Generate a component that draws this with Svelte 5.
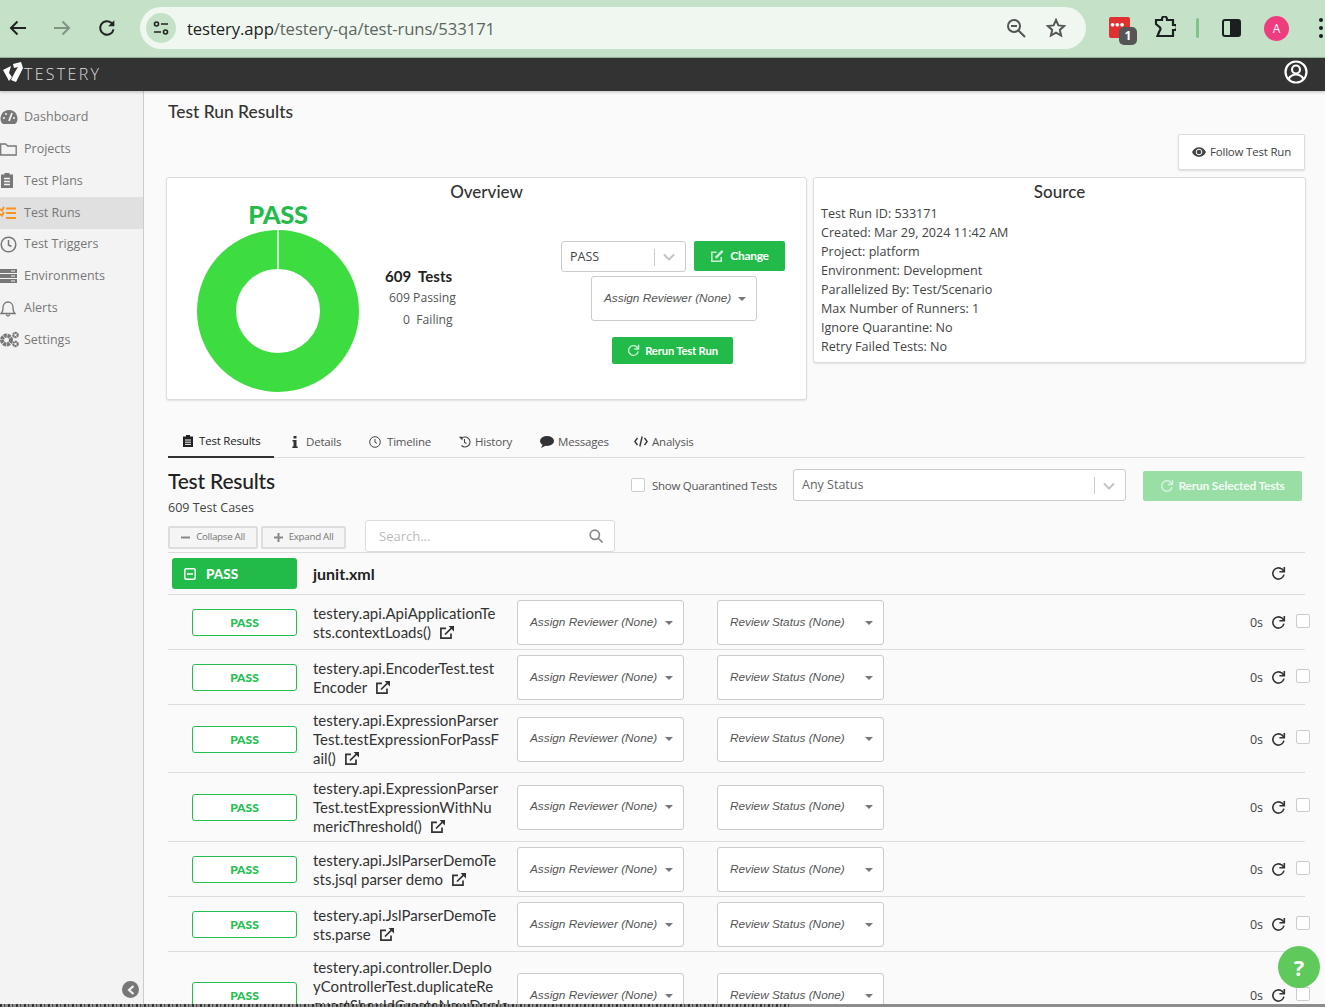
<script>
  const nav = ['Dashboard','Projects','Test Plans','Test Runs','Test Triggers','Environments','Alerts','Settings'];
  const source = ['Test Run ID: 533171','Created: Mar 29, 2024 11:42 AM','Project: platform','Environment: Development','Parallelized By: Test/Scenario','Max Number of Runners: 1','Ignore Quarantine: No','Retry Failed Tests: No'];
  const tabs = ['Test Results','Details','Timeline','History','Messages','Analysis'];
  const rows = [
    ['testery.api.ApiApplicationTe','sts.contextLoads()'],
    ['testery.api.EncoderTest.test','Encoder'],
    ['testery.api.ExpressionParser','Test.testExpressionForPassF','ail()'],
    ['testery.api.ExpressionParser','Test.testExpressionWithNu','mericThreshold()'],
    ['testery.api.JslParserDemoTe','sts.jsql parser demo'],
    ['testery.api.JslParserDemoTe','sts.parse'],
    ['testery.api.controller.Deplo','yControllerTest.duplicateRe','questShouldCreateNewDeplo','y()']
  ];
</script>

{#snippet refresh(size, color)}
  <svg class="ico" width={size} height={size} viewBox="0 0 16 16" fill="none" stroke={color} stroke-width="1.700"><path d="M13.800 9.200A6 6 0 1 1 11.800 3.400L13.900 5.600"/><path d="M14.200 1V6.200H9" stroke-width="1.700"/></svg>
{/snippet}
{#snippet ext()}
  <svg class="ext" width="16" height="15" viewBox="0 0 16 15" fill="none" stroke="#333" stroke-width="1.700"><path d="M12 8.500V13.200H1.900V3.400H7"/><path d="M6 9.500 14 1.600"/><path d="M9.600 1H15V6.400Z" fill="#333" stroke="none"/></svg>
{/snippet}
{#snippet chevron()}
  <svg width="12" height="8" viewBox="0 0 12 8" fill="none" stroke="#c4c4c4" stroke-width="2"><path d="M1 1.500 6 6.500 11 1.500"/></svg>
{/snippet}

<div class="page">
  <header class="chrome">
    <svg class="cbtn" width="18" height="18" viewBox="0 0 18 18" fill="none" stroke="#222" stroke-width="2"><path d="M17 9H2M8.500 2.500 2 9l6.500 6.500"/></svg>
    <svg class="cbtn fwd" width="18" height="18" viewBox="0 0 18 18" fill="none" stroke="#7f9584" stroke-width="2"><path d="M1 9H16M9.500 2.500 16 9l-6.500 6.500"/></svg>
    <svg class="cbtn rl" width="18" height="18" viewBox="0 0 16 16" fill="none" stroke="#222" stroke-width="1.800"><path d="M13.800 9.200A6 6 0 1 1 11.800 3.400L13.900 5.600"/><path d="M14.500 1V6.500H9Z" fill="#222" stroke="none"/></svg>
    <div class="omni">
      <span class="tune"><svg width="16" height="14" viewBox="0 0 16 14" fill="none" stroke="#222" stroke-width="1.600"><circle cx="3.500" cy="3" r="2"/><path d="M8 3h7M1 11h7"/><circle cx="12.500" cy="11" r="2"/></svg></span>
      <span class="url"><b>testery.app</b>/testery-qa/test-runs/533171</span>
      <svg class="zoomi" width="20" height="20" viewBox="0 0 20 20" fill="none" stroke="#555" stroke-width="2"><circle cx="8" cy="8" r="6"/><path d="M5 8h6M12.500 12.500 19 19"/></svg>
      <svg class="star" width="20" height="20" viewBox="0 0 20 20" fill="none" stroke="#555" stroke-width="2"><path d="M10 2l2.400 5.400 5.800.600-4.400 3.900 1.300 5.700L10 14.700l-5.100 2.900 1.300-5.700L1.800 8l5.800-.600z"/></svg>
    </div>
    <div class="ext-red"><span class="dots">•••</span><span class="badge">1</span></div>
    <svg class="puzzle" width="22" height="22" viewBox="0 0 22 22" fill="none" stroke="#1c1f22" stroke-width="2.200"><path d="M2 4h6V3a2.500 2.500 0 0 1 5 0v1h6v5h1.500a2 2 0 0 1 0 5H19v6H3.500L5.500 15a2.500 2.500 0 0 0 0-4L2 8z"/></svg>
    <span class="sep"></span>
    <span class="panel"><span></span></span>
    <span class="avatar">A</span>
    <span class="menu"><i></i><i></i><i></i></span>
  </header>

  <div class="topbar">
    <svg class="logo" width="22" height="22" viewBox="0 0 22 22"><path d="M1 9 9 5 7 12 10 16 7 20Z M11 3 19 1 21 7 14 21 9 19 13 11 16 6 12 7Z" fill="#fff"/></svg>
    <span class="brand">TESTERY</span>
    <svg class="user" width="24" height="24" viewBox="0 0 24 24" fill="none" stroke="#fff" stroke-width="2.200"><circle cx="12" cy="12" r="10.500"/><circle cx="12" cy="9.500" r="4"/><path d="M4.500 19c2-3.500 4.500-4.500 7.500-4.500s5.500 1 7.500 4.500"/></svg>
  </div>

  <div class="body">
    <aside class="side">
      {#each nav as item, i}
        <div class="nav" class:active={i === 3}>
          <span class="nico">
            {#if i === 0}
              <svg width="18" height="16" viewBox="0 0 18 16"><path d="M9 1a8.500 8.500 0 0 0-7.500 12.500L3 15h12l1.500-1.500A8.500 8.500 0 0 0 9 1Z" fill="#777"/><path d="M9 12 12 4" stroke="#f3f3f3" stroke-width="1.800"/><circle cx="4" cy="9" r="1" fill="#f3f3f3"/><circle cx="6" cy="5" r="1" fill="#f3f3f3"/><circle cx="14" cy="9" r="1" fill="#f3f3f3"/></svg>
            {:else if i === 1}
              <svg width="17" height="13" viewBox="0 0 17 13" fill="none" stroke="#777" stroke-width="1.300"><path d="M.7 12V1h5l2 2h8.500v9Z"/></svg>
            {:else if i === 2}
              <svg width="14" height="17" viewBox="0 0 14 17"><path d="M1 2.500h3.500V1h5v1.500H13V16H1Z" fill="#777"/><path d="M4 6.500h6M4 9.500h6M4 12.500h6" stroke="#f3f3f3" stroke-width="1.300"/></svg>
            {:else if i === 3}
              <svg width="17" height="14" viewBox="0 0 17 14" fill="none" stroke="#f7941d" stroke-width="2"><path d="M6 2.500h10M6 7h10M6 12h10M0 3l2 1.500L4 1M0 8l2 1.500L4 6"/></svg>
            {:else if i === 4}
              <svg width="17" height="17" viewBox="0 0 17 17" fill="none" stroke="#777" stroke-width="1.500"><circle cx="8.500" cy="8.500" r="7.300"/><path d="M8.500 4v5l3 1.500"/></svg>
            {:else if i === 5}
              <svg width="17" height="14" viewBox="0 0 17 14"><path d="M0 0h17v4H0zM0 5h17v4H0zM0 10h17v4H0z" fill="#777"/><path d="M11 2h4M11 7h4M11 12h4" stroke="#f3f3f3"/></svg>
            {:else if i === 6}
              <svg width="16" height="17" viewBox="0 0 16 17" fill="none" stroke="#777" stroke-width="1.300"><path d="M1 13.500c2-1.500 2-3 2-6 0-3 2-5.500 5-5.500s5 2.500 5 5.500c0 3 0 4.500 2 6ZM6.500 14.500c0 2 3 2 3 0"/></svg>
            {:else}
              <svg width="20" height="17" viewBox="0 0 20 17"><circle cx="6.500" cy="9" r="4.500" fill="none" stroke="#777" stroke-width="4" stroke-dasharray="3 .6"/><circle cx="15.500" cy="4" r="2.200" fill="none" stroke="#777" stroke-width="2.200" stroke-dasharray="1.800 .4"/><circle cx="15.500" cy="13" r="2.200" fill="none" stroke="#777" stroke-width="2.200" stroke-dasharray="1.800 .4"/></svg>
            {/if}
          </span>
          <span>{item}</span>
        </div>
      {/each}
      <span class="collapse"><svg width="8" height="10" viewBox="0 0 8 10" fill="none" stroke="#f3f3f3" stroke-width="2.200"><path d="M6.500 1 2 5l4.500 4"/></svg></span>
    </aside>

    <main class="main">
      <h1>Test Run Results</h1>
      <div class="followrow">
        <button class="follow">
          <svg width="14" height="10" viewBox="0 0 14 10"><path d="M0 5c3-6.500 11-6.500 14 0-3 6.500-11 6.500-14 0Z" fill="#444"/><circle cx="7" cy="5" r="2.800" fill="none" stroke="#fff" stroke-width="1"/></svg>
          Follow Test Run
        </button>
      </div>

      <section class="cards">
        <div class="card overview">
          <h2>Overview</h2>
          <div class="ovbody">
            <div class="chart">
              <div class="passbig">PASS</div>
              <svg width="162" height="162" viewBox="0 0 162 162">
                <circle cx="81" cy="81" r="61.500" fill="none" stroke="#3ddc41" stroke-width="39"/>
                <path d="M81 0V41" stroke="#fff" stroke-width="1.500"/>
              </svg>
            </div>
            <div class="stats">
              <div class="total"><b>609</b><b>Tests</b></div>
              <div class="st">609 Passing</div>
              <div class="st zero">0 &nbsp;Failing</div>
            </div>
            <div class="controls">
              <div class="ctl1">
                <div class="sel passsel"><span>PASS</span><i class="divider"></i>{@render chevron()}</div>
                <button class="green change">
                  <svg width="15" height="14" viewBox="0 0 16 15" fill="none" stroke="#cdeed6" stroke-width="1.700"><path d="M12 8.500V13.200H1.900V3.400H7"/><path d="M6 9.500 13.500 2" stroke-width="2.600"/></svg>
                  Change
                </button>
              </div>
              <div class="drop assignmain"><span>Assign Reviewer (None)</span><i class="caret"></i></div>
              <button class="green rerun">{@render refresh(13, '#cdeed6')} Rerun Test Run</button>
            </div>
          </div>
        </div>
        <div class="card src">
          <h2>Source</h2>
          <div class="srclines">
            {#each source as line}<div>{line}</div>{/each}
          </div>
        </div>
      </section>

      <nav class="tabs">
        {#each tabs as t, i}
          <div class="tab t{i}" class:on={i === 0}>
            {#if i === 0}
              <svg width="10" height="12" viewBox="0 0 10 12"><path d="M0 1.500h3V0h4v1.500h3V12H0Z" fill="#222"/><path d="M2 5h6M2 7.200h6M2 9.400h6" stroke="#fafafa"/></svg>
            {:else if i === 1}
              <svg width="6" height="12" viewBox="0 0 6 12"><path d="M1.500 0h3v2.500h-3zM.5 4h4v6.500h1.200V12H.3v-1.500h1.200V5.500H.5z" fill="#333"/></svg>
            {:else if i === 2}
              <svg width="12" height="12" viewBox="0 0 12 12" fill="none" stroke="#444" stroke-width="1"><circle cx="6" cy="6" r="5.300"/><path d="M6 3v3.300l2 1"/></svg>
            {:else if i === 3}
              <svg width="13" height="12" viewBox="0 0 13 12" fill="none" stroke="#444" stroke-width="1.100"><path d="M3 3A5 5 0 1 1 3.500 9.500M6.500 3v3.500l2 1"/><path d="M.8 .8H4.500V4.500Z" fill="#444" stroke="none"/></svg>
            {:else if i === 4}
              <svg width="14" height="12" viewBox="0 0 14 12"><ellipse cx="7" cy="5" rx="7" ry="5" fill="#333"/><path d="M3 8 1 12l5-2.500z" fill="#333"/></svg>
            {:else}
              <svg width="14" height="11" viewBox="0 0 14 11" fill="none" stroke="#333" stroke-width="1.400"><path d="M3.500 2 .8 5.500 3.500 9M10.500 2l2.700 3.500L10.500 9M8.200 .5l-2.400 10"/></svg>
            {/if}
            <span>{t}</span>
          </div>
        {/each}
      </nav>

      <section class="reshead">
        <div class="resleft">
          <h3>Test Results</h3>
          <div class="cases">609 Test Cases</div>
          <div class="tools">
            <button class="ghost coll"><svg width="9" height="9" viewBox="0 0 9 9"><path d="M0 3.500h9v2H0z" fill="#888"/></svg>Collapse All</button>
            <button class="ghost exp"><svg width="9" height="9" viewBox="0 0 9 9"><path d="M0 3.500h9v2H0zM3.500 0h2v9h-2z" fill="#888"/></svg>Expand All</button>
            <div class="search"><span>Search...</span>
              <svg width="14" height="14" viewBox="0 0 14 14" fill="none" stroke="#888" stroke-width="1.700"><circle cx="5.800" cy="5.800" r="4.600"/><path d="M9 9l4.500 4.500"/></svg>
            </div>
          </div>
        </div>
        <div class="resright">
          <span class="chk"></span>
          <span class="showq">Show Quarantined Tests</span>
          <div class="sel anyst"><span>Any Status</span><i class="divider"></i>{@render chevron()}</div>
          <button class="rerunsel">{@render refresh(14, '#d9f2df')} Rerun Selected Tests</button>
        </div>
      </section>

      <div class="group">
        <div class="grouppill">
          <svg width="12" height="12" viewBox="0 0 12 12" fill="none" stroke="#fff" stroke-width="1.500"><rect x=".8" y=".8" width="10.400" height="10.400" rx="1.500"/><path d="M3 6h6"/></svg>
          <span>PASS</span>
        </div>
        <b class="gname">junit.xml</b>
        <span class="grefresh">{@render refresh(15, '#333')}</span>
      </div>

      {#each rows as lines, i}
        <div class="row" class:tall={i === 3}>
          <div class="pill">PASS</div>
          <div class="name">
            {#each lines as l, j}{l}{#if j < lines.length - 1}<br />{/if}{/each}{#if i < rows.length - 1}{@render ext()}{/if}
          </div>
          <div class="drop"><span>Assign Reviewer (None)</span><i class="caret"></i></div>
          <div class="drop"><span>Review Status (None)</span><i class="caret"></i></div>
          <div class="meta">
            <span class="dur">0s</span>
            {@render refresh(15, '#333')}
            <span class="chk rowchk"></span>
          </div>
        </div>
      {/each}
    </main>
  </div>
  <div class="strip"></div>
  <div class="help">?</div>
</div>

<style>
  :global(body) { margin: 0; background: #fafafa; }
  * { box-sizing: border-box; }
  .page { position: relative; width: 1325px; height: 1007px; overflow: hidden; display: flex; flex-direction: column; font-family: Lato, "Open Sans", sans-serif; color: #333; }
  .chrome { height: 58px; flex: none; background: #c5e2c8; border-bottom: 1px solid #9db8a0; display: flex; align-items: center; padding-bottom: 1px; }
  .cbtn { margin-left: 9px; flex: none; }
  .fwd { margin-left: 26px; }
  .rl { margin-left: 27px; }
  .omni { margin-left: 24px; width: 946px; height: 42px; background: #f0f7f1; border-radius: 21px; display: flex; align-items: center; padding-left: 6px; flex: none; }
  .tune { width: 30px; height: 30px; border-radius: 50%; background: #c5e2c8; display: flex; align-items: center; justify-content: center; flex: none; }
  .url { margin-left: 11px; font: 16.700px/1 "Open Sans", sans-serif; letter-spacing: -.1px; color: #5c6660; flex: 1; padding-top: 2px; }
  .url b { font-weight: 400; color: #1d2420; }
  .zoomi { margin-right: 20px; margin-left: -1px; }
  .star { margin-right: 20px; }
  .ext-red { position: relative; margin-left: 23px; width: 21px; height: 21px; background: #e03030; border-radius: 2px; flex: none; margin-top: -2px; }
  .dots { position: absolute; left: 1px; top: 3px; color: #fff; font-size: 9px; line-height: 10px; letter-spacing: -.5px; }
  .badge { position: absolute; left: 10px; top: 10px; width: 18px; height: 18px; border-radius: 5px; background: #555; color: #fff; font: 700 12px/18px "Open Sans", sans-serif; text-align: center; }
  .puzzle { margin-left: 24px; flex: none; margin-top: -2px; }
  .sep { width: 3px; height: 20px; background: #7fc48a; margin-left: 20px; border-radius: 2px; flex: none; }
  .panel { margin-left: 23px; width: 19px; height: 18px; border: 2px solid #1c1f22; border-radius: 3px; display: flex; justify-content: flex-end; flex: none; }
  .panel span { width: 9px; background: #1c1f22; }
  .avatar { margin-left: 23px; width: 25px; height: 25px; border-radius: 50%; background: #ee3d7f; color: #fff; font: 12px/25px "Open Sans", sans-serif; text-align: center; flex: none; }
  .menu { margin-left: 30px; display: flex; flex-direction: column; gap: 4px; flex: none; }
  .menu i { width: 4px; height: 4px; border-radius: 50%; background: #1c1f22; display: block; }

  .topbar { height: 33px; flex: none; background: #333; display: flex; align-items: center; padding: 0 17px 0 2px; box-shadow: 0 1px 3px rgba(0,0,0,.25); position: relative; z-index: 1; }
  .logo { margin-top: -6px; flex: none; }
  .brand { color: #ddd; font: 300 16px/1 "Open Sans", sans-serif; letter-spacing: 2.300px; margin-left: 0; flex: 1; margin-top: -1px; }
  .user { margin-top: -5px; }

  .body { flex: 1; display: flex; min-height: 0; }
  .side { position: relative; width: 144px; flex: none; background: #f3f3f3; border-right: 1px solid #ccc; padding-top: 10.500px; font: 12.500px/1 "Open Sans", sans-serif; color: #777; }
  .nav { height: 31.800px; display: flex; align-items: center; }
  .nav.active { background: #e0e0e0; }
  .nico { width: 24px; flex: none; display: flex; align-items: center; }
  .collapse { position: absolute; left: 122px; bottom: 6px; width: 17px; height: 17px; border-radius: 50%; background: #777; display: flex; align-items: center; justify-content: center; }

  .main { flex: 1; min-width: 0; background: #fafafa; padding: 0 20px 0 24px; overflow: hidden; }
  h1 { margin: 0; font-size: 17.400px; font-weight: 500; line-height: 22px; padding-top: 10px; color: #333; height: 43px; }
  .followrow { display: flex; justify-content: flex-end; height: 43px; }
  .follow { width: 127px; height: 36px; background: #fff; border: 1px solid #ddd; border-radius: 2px; box-shadow: 0 1px 2px rgba(0,0,0,.12); font: 11.500px/1 "Open Sans", sans-serif; letter-spacing: -.2px; color: #444; display: flex; align-items: center; justify-content: center; gap: 4px; padding: 0; }

  .cards { display: flex; gap: 6px; margin-left: -2px; margin-right: -1px; align-items: flex-start; }
  .card { background: #fff; border: 1px solid #ddd; border-radius: 3px; box-shadow: 0 1px 2px rgba(0,0,0,.1); }
  .card h2 { margin: 0; font-size: 17px; font-weight: 500; line-height: 22px; text-align: center; color: #333; padding-top: 3px; }
  .overview { width: 641px; height: 223px; }
  .ovbody { display: flex; }
  .chart { width: 162px; margin-left: 30px; }
  .passbig { font-weight: 900; font-size: 25.500px; line-height: 24px; color: #24bb4b; text-align: center; margin-bottom: 3px; letter-spacing: -.3px; margin-top: -1px; padding-bottom: 1px; height: 25px; }
  .chart svg { display: block; }
  .stats { margin-left: 26px; padding-top: 62px; width: 90px; }
  .total { display: flex; gap: 7px; font-size: 15px; line-height: 22px; color: #222; }
  .st { font: 12.200px/22px "Open Sans", sans-serif; color: #555; padding-left: 4px; }
  .zero { padding-left: 18px; }
  .controls { margin-left: 86px; padding-top: 38px; width: 224px; display: flex; flex-direction: column; align-items: center; position: relative; }
  .ctl1 { display: flex; gap: 8px; align-self: stretch; }
  .sel { background: #fff; border: 1px solid #ccc; border-radius: 3px; display: flex; align-items: center; padding: 1px 10px 0 8px; font: 12.500px/1 "Open Sans", sans-serif; color: #444; }
  .sel span { flex: 1; }
  .divider { width: 1px; height: 17px; background: #ccc; margin-right: 8px; }
  .passsel { width: 125px; height: 31px; }
  .green { background: #22bb49; border: 0; border-radius: 2px; color: #fff; font: 700 11.300px/1 Lato, sans-serif; display: flex; align-items: center; justify-content: center; gap: 5px; padding: 0; letter-spacing: -.2px; }
  .change { width: 91px; height: 30px; font-size: 12px; letter-spacing: -.3px; }
  .assignmain { margin-top: 4px; margin-left: 2px; width: 166px; height: 44px; }
  .rerun { margin-top: 16px; margin-left: -1px; width: 121px; height: 27px; }
  .src { width: 493px; height: 186px; }
  .srclines { padding: 1px 0 0 7px; font: 12.600px/19px "Open Sans", sans-serif; color: #444; }

  .tabs { margin-top: 25px; height: 33px; border-bottom: 1px solid #ddd; display: flex; font: 11.500px/1 "Open Sans", sans-serif; color: #555; letter-spacing: -.2px; }
  .tab { display: flex; align-items: center; gap: 6px; height: 33px; white-space: nowrap; }
  .tab.on { padding-left: 15px; border-bottom: 2px solid #333; color: #222; width: 106px; }
  .t1 { margin-left: 18px; gap: 8px; width: 59px; }
  .t2 { margin-left: 18px; width: 71px; }
  .t3 { margin-left: 18px; width: 64px; gap: 4px; }
  .t4 { margin-left: 18px; width: 76px; gap: 4px; }
  .t5 { margin-left: 18px; gap: 4px; }

  .reshead { display: grid; grid-template-columns: 463px 1fr; height: 94px; }
  h3 { margin: 0; font-size: 21px; letter-spacing: -.2px; font-weight: 500; line-height: 26px; padding-top: 10px; height: 37px; color: #222; }
  .cases { font: 12.500px/1 "Open Sans", sans-serif; color: #444; padding-top: 7px; height: 25px; }
  .tools { display: flex; align-items: center; height: 32px; }
  .ghost { height: 23px; background: #f5f5f5; border: 2px solid #ddd; border-radius: 2px; font: 9.800px/1 "Open Sans", sans-serif; letter-spacing: -.3px; color: #777; display: flex; align-items: center; justify-content: center; gap: 6px; padding: 0; margin-top: 2px; }
  .coll { width: 90px; }
  .exp { width: 85px; margin-left: 3px; }
  .search { margin-left: 19px; width: 250px; height: 32px; background: #fff; border: 1px solid #ddd; border-radius: 3px; display: flex; align-items: center; justify-content: space-between; padding: 0 11px 0 13px; font: 13px/1 "Open Sans", sans-serif; color: #bbb; }
  .resright { display: flex; align-items: flex-start; padding-top: 11px; }
  .chk { width: 14px; height: 14px; background: #fff; border: 1px solid #ccc; border-radius: 2px; flex: none; }
  .resright .chk { margin-top: 9px; }
  .showq { margin-left: 7px; font: 11.500px/1 "Open Sans", sans-serif; color: #555; margin-top: 11px; width: 141px; letter-spacing: -.28px; white-space: nowrap; }
  .anyst { width: 333px; height: 32px; color: #666; }
  .rerunsel { margin-left: 17px; margin-top: 2px; width: 159px; height: 30px; background: #98dea5; border: 0; border-radius: 2px; color: #f4fbf6; font: 700 12px/1 Lato, sans-serif; letter-spacing: -.2px; display: flex; align-items: center; justify-content: center; gap: 4px; padding: 0; }

  .group { height: 43px; border-top: 1px solid #ddd; border-bottom: 1px solid #ddd; display: flex; align-items: center; padding-bottom: 1px; }
  .grouppill { margin-left: 4px; width: 125px; height: 31px; background: #22bb49; border-radius: 3px; color: #fff; font-weight: 900; font-size: 13.500px; display: flex; align-items: center; gap: 10px; padding: 1px 0 0 12px; }
  .gname { margin-left: 16px; font-size: 16px; color: #222; flex: 1; }
  .grefresh { margin: 1px 19px 0 0; display: flex; }

  .row { display: grid; grid-template-columns: 24px 105px 16px 188px 16px 167px 33px 167px 1fr; align-items: center; padding: 5px 0 4px; border-bottom: 1px solid #ddd; }
  .row.tall { padding-bottom: 5px; }
  .pill { grid-column: 2; height: 27px; background: #fff; border: 1px solid #22c14f; border-radius: 3px; color: #22c14f; font: 900 12px/25px Lato, sans-serif; text-align: center; }
  .name { grid-column: 4; font: 15px/19px Lato, "Open Sans", sans-serif; letter-spacing: .02px; color: #333; white-space: nowrap; padding-top: 1px; }
  .ext { margin-left: 8px; vertical-align: -2px; }
  .drop { height: 45px; background: #fff; border: 1px solid #ccc; border-radius: 3px; display: flex; align-items: center; justify-content: space-between; padding: 0 10px 0 12px; font: italic 11.800px/1 "Liberation Sans", sans-serif; color: #555; white-space: nowrap; }
  .row .drop:nth-child(3) { grid-column: 6; }
  .row .drop:nth-child(4) { grid-column: 8; }
  .caret { width: 0; height: 0; border: 4px solid transparent; border-top-color: #777; border-bottom: 0; flex: none; }
  .meta { grid-column: 9; display: flex; align-items: center; justify-content: flex-end; margin-right: -5px; }
  .dur { font: 12.500px/1 "Open Sans", sans-serif; color: #444; margin-right: 8px; margin-top: 2px; }
  .rowchk { margin-left: 10px; margin-top: -4px; }
  .ico { flex: none; }
  .strip { height: 3px; flex: none; background: linear-gradient(90deg, transparent 790px, #8c8c8c 790px), repeating-linear-gradient(90deg, #333 0 2px, #999 2px 4px, #444 4px 5px, #8c8c8c 5px 8px); }
  .help { position: absolute; left: 1278px; top: 946px; width: 42px; height: 42px; border-radius: 50%; background: #5fc95c; color: #fff; font: 700 22px/42px "Open Sans", sans-serif; text-align: center; }
</style>
